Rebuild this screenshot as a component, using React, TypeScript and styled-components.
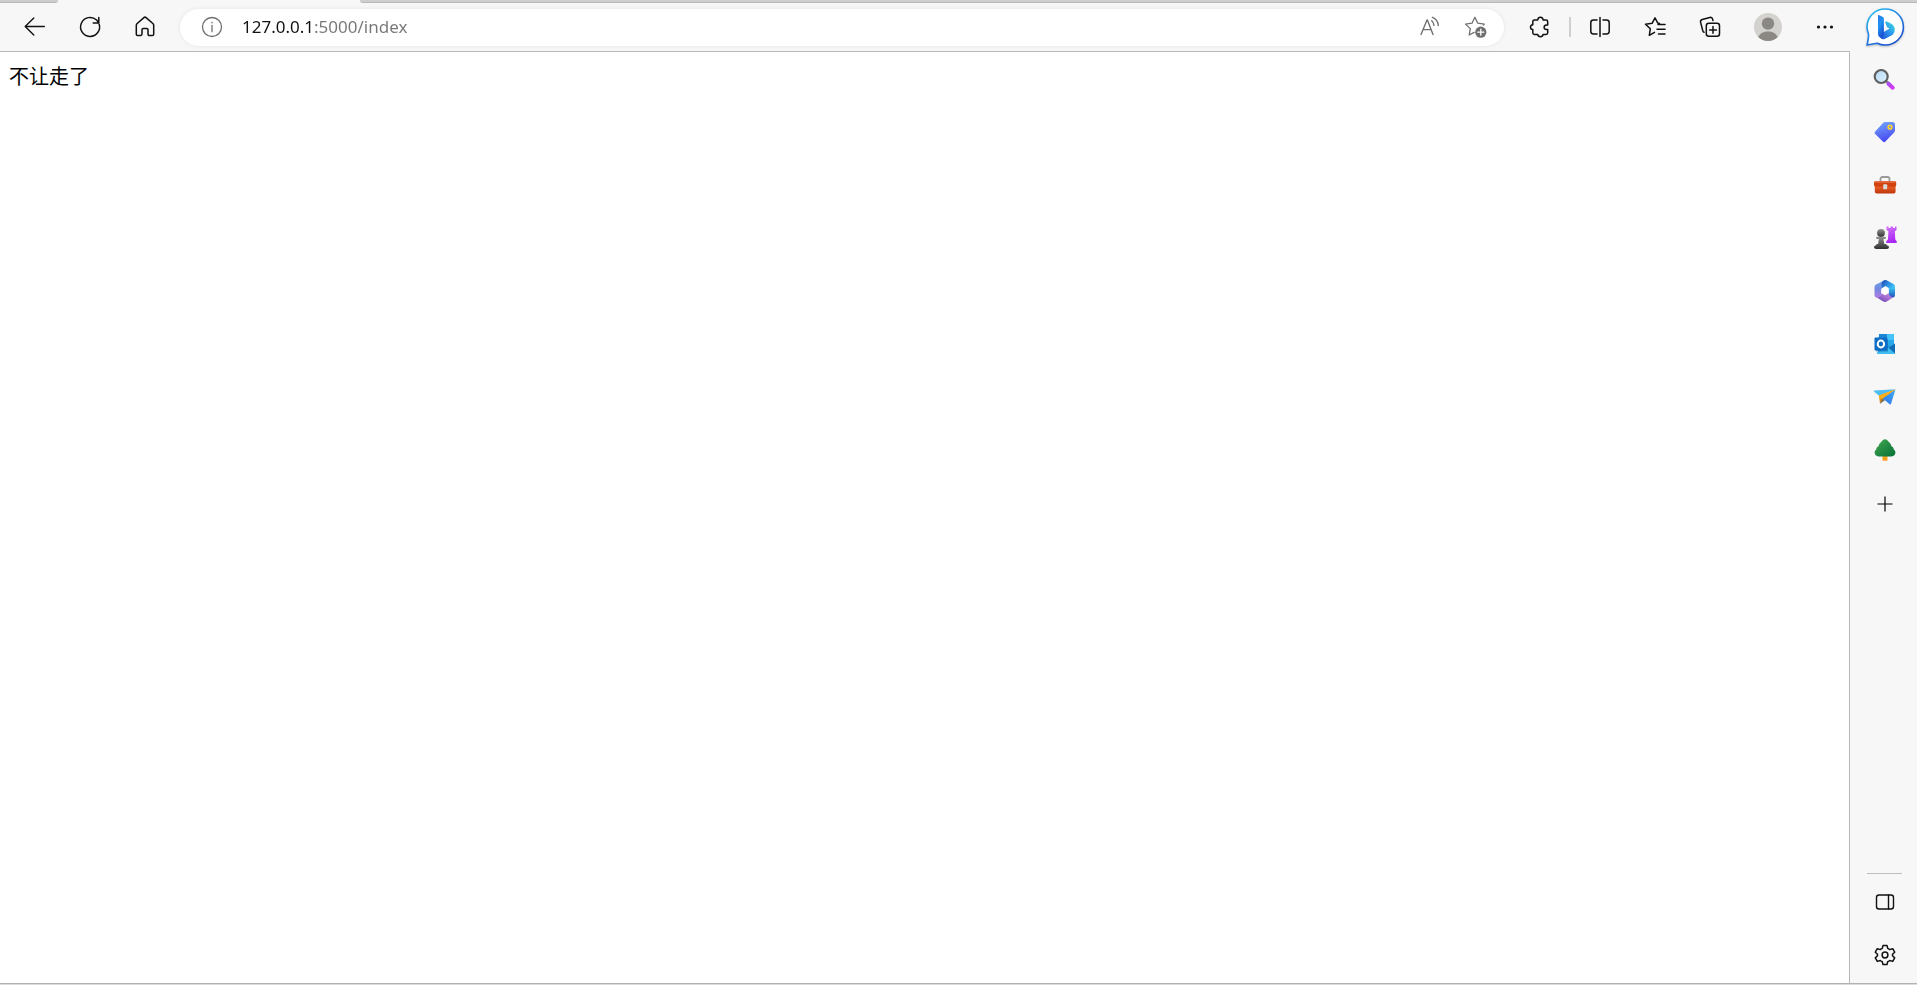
import React from "react";
import styled, { createGlobalStyle } from "styled-components";

const GlobalStyle = createGlobalStyle`
  *, *::before, *::after { box-sizing: border-box; }
  html, body { margin: 0; padding: 0; background: #f7f7f7; }
  body { font-family: "Noto Sans", "Noto Sans CJK SC", sans-serif; color: #111; }
`;

const Window = styled.div`
  display: flex;
  flex-direction: column;
  min-height: 100vh;
  background: #f7f7f7;
`;

const TabStrip = styled.div`
  display: flex;
  height: 3px;
  background: #f7f7f7;
`;

const InactiveTabs = styled.div<{ $side: "left" | "right" }>`
  background: #cecece;
  border-bottom: 1px solid #b9b9b9;
  ${(p) =>
    p.$side === "left"
      ? "width: 58px; border-bottom-right-radius: 4px;"
      : "flex: 1; border-bottom-left-radius: 4px;"}
`;

const ActiveTab = styled.div`
  width: 302px;
`;

const Body = styled.div`
  flex: 1;
  display: flex;
`;

const Main = styled.div`
  flex: 1;
  min-width: 0;
  display: flex;
  flex-direction: column;
`;

const Toolbar = styled.header`
  display: flex;
  align-items: center;
  height: 48px;
  padding-left: 7px;
`;

const IconButton = styled.button<{ $width?: number }>`
  display: flex;
  flex: none;
  align-items: center;
  justify-content: center;
  width: ${(p) => p.$width ?? 55}px;
  height: 44px;
  padding: 0;
  border: 0;
  background: none;
  color: #111;
  svg { display: block; overflow: visible; }
`;

const AddressBar = styled.div`
  flex: 1;
  display: flex;
  align-items: center;
  height: 37px;
  margin: 0 8px;
  padding: 0 6px;
  border-radius: 19px;
  background: #fff;
  box-shadow: 0 0 4px rgba(0, 0, 0, 0.08);
  ${IconButton} {
    height: 34px;
    color: #707070;
  }
`;

const AddressInput = styled.input`
  flex: 1;
  min-width: 0;
  height: 32px;
  margin-left: 4px;
  padding: 0;
  border: 0;
  outline: 0;
  font-family: "Noto Sans", sans-serif;
  font-size: 17px;
  line-height: 32px;
  color: transparent;
  background: linear-gradient(to right, #111 72px, #767676 72px);
  background-clip: text;
  -webkit-background-clip: text;
`;

const Separator = styled.div`
  width: 2px;
  height: 20px;
  margin: 0 1px 0 2px;
  background: #cfcfcf;
`;

const Page = styled.main`
  flex: 1;
  padding: 10px 9px;
  border-top: 1px solid #b8b8b8;
  border-right: 1px solid #b8b8b8;
  background: #fff;
`;

const PageText = styled.p`
  margin: 0;
  font-family: "Noto Sans CJK SC", sans-serif;
  font-size: 20px;
  line-height: 28px;
  color: #000;
`;

const Sidebar = styled.aside`
  display: flex;
  flex-direction: column;
  align-items: center;
  width: 67px;
  padding: 0 0 2px 2px;
`;

const SideButton = styled(IconButton)<{ $height?: number }>`
  width: 48px;
  height: ${(p) => p.$height ?? 53}px;
`;

const AppList = styled.nav`
  display: grid;
  grid-auto-rows: 1fr;
  height: 424px;
  ${SideButton} { height: 100%; }
`;

const SideFooter = styled.div`
  display: flex;
  flex-direction: column;
  align-items: center;
  margin-top: auto;
`;

const SideRule = styled.hr`
  width: 35px;
  height: 1px;
  margin: 0 0 1px;
  border: 0;
  background: #bdbdbd;
`;

const BottomEdge = styled.div`
  height: 2px;
  background: #dcdcdc;
  border-top: 1px solid #b2b2b2;
`;

type IconProps = { children: React.ReactNode; width?: number };

const Line = ({ width = 1.4, children }: IconProps) => (
  <svg
    width="24"
    height="24"
    viewBox="0 0 24 24"
    fill="none"
    stroke="currentColor"
    strokeWidth={width}
    strokeLinecap="round"
    strokeLinejoin="round"
    aria-hidden="true"
  >
    {children}
  </svg>
);

const BackIcon = () => (
  <Line>
    <path d="M21.3 11.5H2.2M10.8 3 2.2 11.5l8.6 8.5" />
  </Line>
);

const ReloadIcon = () => (
  <Line width={1.5}>
    <path d="M21.2 9.2A9.5 9.5 0 1 1 18.6 5l2 2.4M20.8 2.5v5.4h-5.6" />
  </Line>
);

const HomeIcon = () => (
  <Line width={1.5}>
    <path d="M3.3 10.2c0-.6.2-1 .6-1.4l7-6.2c.7-.6 1.5-.6 2.2 0l7 6.2c.4.4.6.8.6 1.4v9c0 .8-.6 1.3-1.3 1.3h-3c-.8 0-1.4-.6-1.4-1.4v-4.3c0-.7-.5-1.2-1.2-1.2h-3.6c-.7 0-1.2.5-1.2 1.2v4.3c0 .8-.6 1.4-1.4 1.4h-3c-.7 0-1.3-.5-1.3-1.3z" />
  </Line>
);

const InfoIcon = () => (
  <Line width={1.3}>
    <circle cx="12" cy="12" r="9.5" />
    <path d="M12 10.5v6.2" />
    <circle cx="12" cy="7.6" r=".8" fill="currentColor" stroke="none" />
  </Line>
);

const ReadAloudIcon = () => (
  <Line width={1.4}>
    <path d="M4 19.500 10 5h.4L16 19.500M6.100 14.600h8M14.700 5.800c1.400 1.100 2.200 2.600 2.300 4.600M15.500 2.300c3.500 1.600 5.600 4.600 5.800 8.200" />
  </Line>
);

const StarAddIcon = () => (
  <Line width={1.3}>
    <path d="M11.1 17.4 6.2 20l1.1-6.4-4.8-4.500 6.500-.9 2.900-5.900 2.900 5.900 6.500.9-1 1" />
    <circle cx="17.8" cy="17.2" r="5.6" fill="#6f6f6f" stroke="none" />
    <path d="M17.8 14.2v6M14.8 17.2h6" stroke="#fff" />
  </Line>
);

const PuzzleIcon = () => (
  <Line width={1.5}>
    <path d="M6.500 5h3.200c.2-1.700 1.200-2.700 2.700-2.700s2.500 1 2.700 2.700H18c1.100 0 1.700.6 1.700 1.700v3.200h-1.100c-1.600 0-2.500.9-2.500 2.300s.9 2.300 2.500 2.300h1.100v3.200c0 1.100-.6 1.700-1.700 1.700h-2.900c-.2 1.500-1.200 2.400-2.700 2.400s-2.500-.9-2.700-2.400H6.500c-1.100 0-1.700-.6-1.700-1.700v-3.100c-1.500-.2-2.300-1.100-2.300-2.400s.8-2.200 2.300-2.400V6.700C4.800 5.600 5.400 5 6.500 5z" />
  </Line>
);

const SplitIcon = () => (
  <Line width={1.5}>
    <path d="M9 5H5.500C3.800 5 2.800 6 2.800 7.700v8.600c0 1.700 1 2.700 2.700 2.700H9M15 5h3.500c1.700 0 2.700 1 2.700 2.700v8.600c0 1.700-1 2.700-2.700 2.700H15M12 2.500v19" />
  </Line>
);

const FavoritesIcon = () => (
  <Line width={1.5}>
    <path d="m11.5 17.3-5.200 3 1-6.500L2.500 9.300l6.600-1L12 2.800l2.800 5.300 1.700.3M15 9.500h7M14 14.200h8M15.500 19H22" />
  </Line>
);

const CollectionsIcon = () => (
  <Line width={1.5}>
    <rect x="8.300" y="8.300" width="13.200" height="13" rx="2.500" />
    <path d="M15 11.500v6.800M11.600 14.900h6.800M6 17.300c-.6-.2-1-.8-1.200-1.500L2.600 7.400C2.200 5.900 2.900 4.900 4.300 4.500l7.500-2c1.400-.4 2.400.2 2.800 1.600l.4 1.500" />
  </Line>
);

const ProfileIcon = () => (
  <svg width="28" height="28" viewBox="0 0 28 28" aria-hidden="true">
    <circle cx="14" cy="14" r="14" fill="#d3d2ce" />
    <circle cx="14" cy="10.6" r="6.2" fill="#8b8783" />
    <path d="M4.200 24c2-3.900 5.500-5.600 9.800-5.600s7.800 1.700 9.800 5.600A14 14 0 0 1 14 28a14 14 0 0 1-9.800-4z" fill="#8b8783" />
  </svg>
);

const MoreIcon = () => (
  <svg width="24" height="24" viewBox="0 0 24 24" fill="#111" aria-hidden="true">
    <circle cx="5.5" cy="12" r="1.6" />
    <circle cx="12" cy="12" r="1.6" />
    <circle cx="18.5" cy="12" r="1.6" />
  </svg>
);

const BingIcon = () => (
  <svg width="40" height="40" viewBox="0 0 40 40" aria-hidden="true">
    <defs>
      <linearGradient id="bubble" x1="0" y1="0" x2=".7" y2="1">
        <stop offset="0" stopColor="#28c8f3" />
        <stop offset=".5" stopColor="#2584e2" />
        <stop offset="1" stopColor="#1d51cf" />
      </linearGradient>
      <linearGradient id="stem" x1="0" y1="0" x2=".5" y2="1">
        <stop offset="0" stopColor="#2f78e8" />
        <stop offset=".5" stopColor="#1e93f0" />
        <stop offset="1" stopColor="#1c50d3" />
      </linearGradient>
      <linearGradient id="bowl" x1="0" y1="1" x2="1" y2="0">
        <stop offset="0" stopColor="#194bd0" />
        <stop offset=".5" stopColor="#2c91ed" />
        <stop offset="1" stopColor="#43e7df" />
      </linearGradient>
      <filter id="shade" x="-20%" y="-20%" width="140%" height="140%">
        <feDropShadow dx="0" dy="1" stdDeviation="1" floodOpacity=".25" />
      </filter>
    </defs>
    <path d="M20.200 1c10.200 0 18.200 8 18.200 18s-8 18-18.200 18c-2.900 0-5.500-.6-7.900-1.800-3.500.6-7.200 1.500-10.200 1.700.9-3.800 1.700-7.400 1.400-11.100A18 18 0 0 1 2 19C2 9 10 1 20.200 1z" fill="#fff" stroke="url(#bubble)" strokeWidth="1.600" filter="url(#shade)" />
    <path d="m13.800 26.700 4.800-2.700 6-3.600-2.500-1.200-1.800-4.500c-.3-.8.4-1.400 1.200-1.100 4.100 1.300 8.100 3.500 8.300 7.900.1 2.600-1.200 4.700-3.300 6l-6.900 3.400c-2.600 1.100-4.800-.9-5.800-4.200z" fill="url(#bowl)" />
    <path d="m13.800 7.100 4.100 1.800c.7.4 1 .9 1 1.700v15.200c0 2.200-1.100 3.600-2.700 3.600-1.900 0-3.200-1.200-3.200-3.200V7.600c0-.5.400-.7.800-.5z" fill="url(#stem)" />
  </svg>
);

const Art = ({ children }: { children: React.ReactNode }) => (
  <svg width="24" height="24" viewBox="0 0 24 24" aria-hidden="true">
    {children}
  </svg>
);

const SearchArt = () => (
  <Art>
    <defs>
      <linearGradient id="lens" x1="0" y1="0" x2="1" y2="1">
        <stop offset="0" stopColor="#b4d6f0" />
        <stop offset="1" stopColor="#def3ff" />
      </linearGradient>
      <linearGradient id="handle" x1="0" y1="0" x2="1" y2="1">
        <stop offset="0" stopColor="#a94ef0" />
        <stop offset="1" stopColor="#d436f2" />
      </linearGradient>
    </defs>
    <path d="m13 14 3 3" stroke="#858585" strokeWidth="2.500" />
    <path d="m15.500 16.700 4.200 4" stroke="url(#handle)" strokeWidth="4" strokeLinecap="round" />
    <circle cx="8.200" cy="9.500" r="6.500" fill="url(#lens)" stroke="#5f5f5f" strokeWidth="2.200" />
  </Art>
);

const TagArt = () => (
  <Art>
    <defs>
      <linearGradient id="tag" x1=".3" y1="0" x2=".6" y2="1">
        <stop offset="0" stopColor="#72a4fa" />
        <stop offset="1" stopColor="#4543f2" />
      </linearGradient>
    </defs>
    <path d="M12.200 2h7.300c1.400 0 2.500 1.100 2.500 2.500v5.700c0 .9-.3 1.600-.9 2.200l-8.700 9.200c-.8.800-1.800.8-2.600 0l-7.600-7.500c-.8-.8-.8-1.800 0-2.600L10 3c.6-.7 1.300-1 2.200-1z" fill="url(#tag)" />
    <circle cx="17" cy="7.200" r="1.900" fill="#8f93c8" stroke="#ffd42a" strokeWidth="1.500" />
  </Art>
);

const ToolboxArt = () => (
  <Art>
    <defs>
      <linearGradient id="box" x1="0" y1="0" x2="0" y2="1">
        <stop offset="0" stopColor="#f1672b" />
        <stop offset="1" stopColor="#bd360c" />
      </linearGradient>
    </defs>
    <path d="M7.500 8.500V6c0-1.300.7-2 2-2h5c1.300 0 2 .7 2 2v2.500" fill="none" stroke="#9a9a9a" strokeWidth="1.800" />
    <path d="M1.800 12h20.800v6.500c0 1.200-.8 2-2 2H3.800c-1.200 0-2-.8-2-2z" fill="url(#box)" />
    <path d="M2.500 8.300h19.300c.8 0 1.400.6 1.400 1.400v2.300c0 1-1 1.800-2.300 1.800H3.100C2 13.800 1 13 1 12V9.700c0-.8.6-1.400 1.500-1.400z" fill="#d0430f" />
    <path d="M1.700 9.200h20.800" stroke="#ee7042" />
    <rect x="10.200" y="11.200" width="4" height="5" rx="1" fill="#d6dcdc" />
  </Art>
);

const GamesArt = () => (
  <Art>
    <defs>
      <linearGradient id="pawn" x1="0" y1="0" x2="0" y2="1">
        <stop offset="0" stopColor="#929292" />
        <stop offset="1" stopColor="#303030" />
      </linearGradient>
      <linearGradient id="rook" x1="0" y1="0" x2=".3" y2="1">
        <stop offset="0" stopColor="#d475f9" />
        <stop offset="1" stopColor="#a927f3" />
      </linearGradient>
    </defs>
    <path d="M13.500.500h2V2h2V.500H20V2h2V.500h1.500V4l-1.700 1.200.5 8.300 1.400 1.800v1.800H13.200v-1.800l1.700-1.800.5-8.300-1.900-1.200z" fill="url(#rook)" />
    <circle cx="8" cy="7" r="3.900" fill="url(#pawn)" />
    <path d="M4 10.700h8c1.300 0 1.300 2.200 0 2.200h-1.500l.8 5.100h1.200c.7 0 1.100.5 1.100 1.200 1.600.2 2.400 1 2.400 1.900 0 1.200-.8 1.900-2 1.900H3.200c-1.200 0-2.200-.7-2.200-1.900 0-.9.8-1.700 2.200-1.900 0-.7.4-1.200 1.100-1.200h.8l.8-5.100H4c-1.300 0-1.300-2.200 0-2.200z" fill="url(#pawn)" />
  </Art>
);

const MicrosoftArt = () => (
  <Art>
    <defs>
      <linearGradient id="hexA" x1="0" y1="0" x2="0" y2="1">
        <stop offset="0" stopColor="#6fa5ea" />
        <stop offset=".5" stopColor="#7388e2" />
        <stop offset="1" stopColor="#b07be0" />
      </linearGradient>
      <linearGradient id="hexB" x1="0" y1="0" x2="1" y2=".7">
        <stop offset="0" stopColor="#2347a8" />
        <stop offset=".5" stopColor="#2c8fe4" />
        <stop offset="1" stopColor="#45d0f6" />
      </linearGradient>
      <linearGradient id="hexC" x1="0" y1="1" x2="1" y2="0">
        <stop offset="0" stopColor="#5a3ca7" />
        <stop offset=".5" stopColor="#a06ad2" />
        <stop offset="1" stopColor="#d598e2" />
      </linearGradient>
      <linearGradient id="hexD" x1="0" y1="0" x2="0" y2="1">
        <stop offset="0" stopColor="#35bdf0" />
        <stop offset="1" stopColor="#2b4fb8" />
      </linearGradient>
    </defs>
    <path d="M12 1 3.500 5.300C2.200 6 1.500 7 1.500 8.500v7.300c0 1.800 1.200 3 2.900 3 2.400 0 4.300-1.400 4.300-4V7z" fill="url(#hexA)" />
    <path d="M8.500 5.500v4L12.500 7l9.500 6V8c0-1.500-.7-2.600-2-3.300l-6-3.300c-2.300-1.200-5.500.6-5.500 4.100z" fill="url(#hexB)" />
    <path d="M15.500 9.300 22 9.500v6.300c0 1.700-.8 2.500-2 2.700-2.500.3-4.500-1.500-4.500-4z" fill="url(#hexD)" />
    <path d="M3.500 18.300c2.800.6 5.200-1.200 5.200-4.300l3.300 2 3.500-2.200c.3 3.200 2.500 4.800 5 4.500l-6.300 4c-1.500.9-2.900.9-4.400 0z" fill="url(#hexC)" />
    <path d="m12 7.700 3.800 2.200v4.200L12 16.300l-3.800-2.200V9.900z" fill="#fff" />
  </Art>
);

const OutlookArt = () => (
  <Art>
    <path d="M6 3c0-.6.4-1 1-1h14v20H5V12z" fill="#249ce0" />
    <path d="M6 2h8v7H6z" fill="#1b86d6" />
    <path d="M14 2h7v6h-7z" fill="#43c3f7" />
    <path d="M10 8h11v5h-6z" fill="#28a8ea" />
    <path d="m12 18 10-6.500V21c0 .6-.4 1-1 1H5c-.6 0-1-.4-1-1v-1z" fill="#3fbcf0" />
    <path d="m15.500 15.800 6.500-4.300v10z" fill="#116ab5" />
    <rect x="3" y="7" width="12" height="12.500" fill="#075299" opacity=".45" />
    <rect x="1.500" y="5.500" width="12.800" height="13" rx="1" fill="#0b6dc6" />
    <ellipse cx="7.900" cy="12" rx="3.200" ry="3.400" fill="none" stroke="#fff" strokeWidth="2" />
  </Art>
);

const PlaneArt = () => (
  <Art>
    <defs>
      <linearGradient id="wing" x1="1" y1="0" x2=".3" y2="1">
        <stop offset="0" stopColor="#41aafa" />
        <stop offset="1" stopColor="#317de9" />
      </linearGradient>
    </defs>
    <path d="M22.500 4.500 6 10.800l1 8 3.200-5z" fill="#d98a10" />
    <path d="M22.500 4.500 9.500 13.200l7.200 6c.6.400 1.100.2 1.300-.4z" fill="url(#wing)" />
    <path d="m9.600 13.300-2.700 5.500 5-3.500z" fill="#6d6a62" />
    <path d="M1.300 5.500 22.500 4.300 6 10.700 1 6.400c-.4-.4-.2-.9.300-.9z" fill="#4fbcf2" />
    <path d="M22.500 4.300 5.700 10.600l.6 3.200 3.500-.3z" fill="#fbae1c" />
  </Art>
);

const TreeArt = () => (
  <Art>
    <defs>
      <linearGradient id="leaf" x1="0" y1="0" x2="1" y2="1">
        <stop offset="0" stopColor="#48ad54" />
        <stop offset=".5" stopColor="#238b43" />
        <stop offset="1" stopColor="#087238" />
      </linearGradient>
    </defs>
    <path d="M9.500 17h5v4.800c0 .6-.4 1-1 1h-3c-.6 0-1-.4-1-1z" fill="#f79f1f" />
    <path d="M9.700 2.300c1.300-1.400 3.300-1.400 4.600 0l3 3.300c.7.800 1 1.500 1 2.300 1.700 1 2.400 2 2.500 3.500 1.300 1 1.600 2 1.600 3.200 0 2.300-1.600 3.800-3.900 3.800h-13c-2.300 0-3.900-1.500-3.900-3.800 0-1.200.4-2.200 1.600-3.200.1-1.500.9-2.500 2.500-3.500 0-.8.300-1.500 1-2.300z" fill="url(#leaf)" />
  </Art>
);

const PlusIcon = () => (
  <svg width="16" height="16" viewBox="0 0 16 16" stroke="#000" aria-hidden="true">
    <path d="M8 .500v15M.500 8h15" strokeWidth="1.200" />
  </svg>
);

const PanelIcon = () => (
  <Line>
    <rect x="3.500" y="5" width="17" height="14" rx="2.500" />
    <path d="M15.500 5v14" />
  </Line>
);

const GearIcon = () => (
  <Line width={1.5}>
    <path d="M10 2.400h4l.7 3c.8.300 1.400.7 2 1.200l3-.9 2 3.500-2.200 2.100c.1.500.1 1 0 1.500l2.200 2.100-2 3.500-3-.9c-.6.500-1.200.9-2 1.200l-.7 2.900h-4l-.7-2.900c-.8-.3-1.400-.7-2-1.200l-3 .9-2-3.500 2.200-2.100a6 6 0 0 1 0-1.500L2.300 9.200l2-3.500 3 .9c.6-.5 1.200-.9 2-1.200z" />
    <circle cx="12" cy="12" r="2.900" />
  </Line>
);

const apps = [
  { label: "Search", Icon: SearchArt },
  { label: "Shopping", Icon: TagArt },
  { label: "Tools", Icon: ToolboxArt },
  { label: "Games", Icon: GamesArt },
  { label: "Microsoft 365", Icon: MicrosoftArt },
  { label: "Outlook", Icon: OutlookArt },
  { label: "Drop", Icon: PlaneArt },
  { label: "E-tree", Icon: TreeArt },
];

export default function App() {
  return (
    <>
      <GlobalStyle />
      <Window>
        <TabStrip>
          <InactiveTabs $side="left" />
          <ActiveTab />
          <InactiveTabs $side="right" />
        </TabStrip>
        <Body>
          <Main>
            <Toolbar>
              <IconButton aria-label="Back"><BackIcon /></IconButton>
              <IconButton aria-label="Refresh"><ReloadIcon /></IconButton>
              <IconButton aria-label="Home"><HomeIcon /></IconButton>
              <AddressBar>
                <IconButton $width={52} aria-label="Site information"><InfoIcon /></IconButton>
                <AddressInput aria-label="Address" defaultValue="127.0.0.1:5000/index" spellCheck={false} />
                <IconButton $width={46} aria-label="Read aloud"><ReadAloudIcon /></IconButton>
                <IconButton $width={46} aria-label="Add to favorites"><StarAddIcon /></IconButton>
              </AddressBar>
              <IconButton aria-label="Extensions"><PuzzleIcon /></IconButton>
              <Separator />
              <IconButton aria-label="Split screen"><SplitIcon /></IconButton>
              <IconButton aria-label="Favorites"><FavoritesIcon /></IconButton>
              <IconButton aria-label="Collections"><CollectionsIcon /></IconButton>
              <IconButton $width={62} aria-label="Profile"><ProfileIcon /></IconButton>
              <IconButton $width={51} aria-label="Settings and more"><MoreIcon /></IconButton>
            </Toolbar>
            <Page>
              <PageText lang="zh-CN">不让走了</PageText>
            </Page>
          </Main>
          <Sidebar>
            <SideButton $height={49} aria-label="Bing"><BingIcon /></SideButton>
            <AppList aria-label="Sidebar apps">
              {apps.map(({ label, Icon }) => (
                <SideButton key={label} aria-label={label}><Icon /></SideButton>
              ))}
            </AppList>
            <SideButton $height={56} aria-label="Customize"><PlusIcon /></SideButton>
            <SideFooter>
              <SideRule />
              <SideButton aria-label="Hide sidebar"><PanelIcon /></SideButton>
              <SideButton aria-label="Settings"><GearIcon /></SideButton>
            </SideFooter>
          </Sidebar>
        </Body>
        <BottomEdge />
      </Window>
    </>
  );
}
